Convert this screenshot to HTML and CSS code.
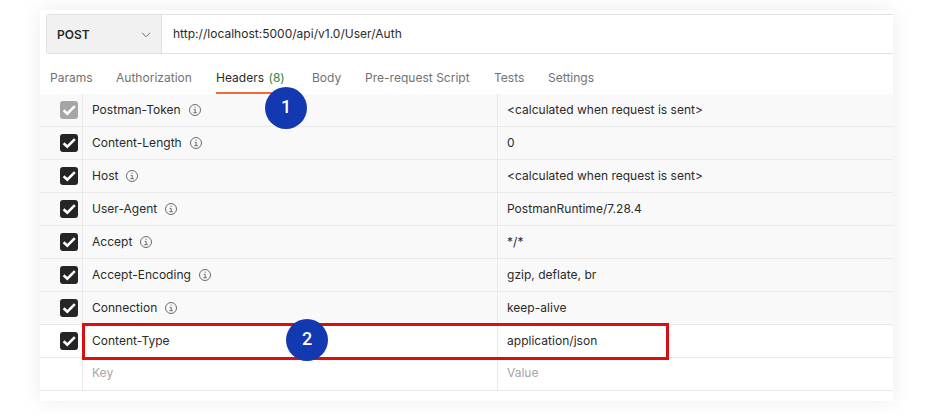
FILE: index.html
```
<!DOCTYPE html>
<html lang="en">
<head>
<meta charset="utf-8">
<title>Request headers</title>
<link rel="stylesheet" href="styles.css">
</head>
<body>
<svg class="defs" width="0" height="0">
  <symbol id="check" viewBox="0 0 17 17"><path d="M3.4 8.7 6.9 12 14 4.9" fill="none" stroke="#fff" stroke-width="2.4"/></symbol>
  <symbol id="info" viewBox="0 0 12 12"><circle cx="6" cy="6" r="5.5" fill="none" stroke="#6b6b6b"/><path d="M4.6 5.4H6.2V8.6M4.3 8.7H7.9M5.5 3.2H6.7" fill="none" stroke="#6b6b6b"/></symbol>
</svg>
<main class="card">
  <div class="request">
    <div class="method"><span>POST</span><svg width="10" height="6" viewBox="0 0 10 6"><path d="M1 .8 5 4.8 9 .8" fill="none" stroke="#6b6b6b"/></svg></div>
    <div class="url">http://localhost:5000/api/v1.0/User/Auth</div>
  </div>
  <nav class="tabs">
    <span class="tab params">Params</span>
    <span class="tab auth">Authorization</span>
    <span class="tab headers">Headers <b>(8)</b></span>
    <span class="tab body">Body</span>
    <span class="tab script">Pre-request Script</span>
    <span class="tab tests">Tests</span>
    <span class="tab">Settings</span>
  </nav>
  <div class="table">
    <div class="row auto"><div class="tick"><svg class="box off"><use href="#check"/></svg></div><div class="cell">Postman-Token<svg class="info"><use href="#info"/></svg></div><div class="cell">&lt;calculated when request is sent&gt;</div></div>
    <div class="row auto"><div class="tick"><svg class="box"><use href="#check"/></svg></div><div class="cell">Content-Length<svg class="info"><use href="#info"/></svg></div><div class="cell">0</div></div>
    <div class="row auto"><div class="tick"><svg class="box"><use href="#check"/></svg></div><div class="cell">Host<svg class="info"><use href="#info"/></svg></div><div class="cell">&lt;calculated when request is sent&gt;</div></div>
    <div class="row auto"><div class="tick"><svg class="box"><use href="#check"/></svg></div><div class="cell">User-Agent<svg class="info"><use href="#info"/></svg></div><div class="cell">PostmanRuntime/7.28.4</div></div>
    <div class="row auto"><div class="tick"><svg class="box"><use href="#check"/></svg></div><div class="cell">Accept<svg class="info"><use href="#info"/></svg></div><div class="cell">*/*</div></div>
    <div class="row auto"><div class="tick"><svg class="box"><use href="#check"/></svg></div><div class="cell">Accept-Encoding<svg class="info"><use href="#info"/></svg></div><div class="cell">gzip, deflate, br</div></div>
    <div class="row auto"><div class="tick"><svg class="box"><use href="#check"/></svg></div><div class="cell">Connection<svg class="info"><use href="#info"/></svg></div><div class="cell">keep-alive</div></div>
    <div class="row"><div class="tick"><svg class="box"><use href="#check"/></svg></div><div class="cell">Content-Type</div><div class="cell">application/json</div></div>
    <div class="row empty"><div class="tick"></div><div class="cell">Key</div><div class="cell">Value</div></div>
  </div>
  <div class="highlight"></div>
  <div class="badge one">1</div>
  <div class="badge two">2</div>
</main>
</body>
</html>
```
FILE: styles.css
```
* { box-sizing: border-box; }
body {
  margin: 0;
  padding: 10px 38px 14px 40px;
  height: 415px;
  overflow: hidden;
  background: #fff;
  color: #2a2a2a;
  font: 12px/16px Inter, "Liberation Sans", sans-serif;
  letter-spacing: 0.02px;
}
svg { display: block; flex: none; }
.defs { position: absolute; }
.card {
  position: relative;
  height: 391px;
  padding-top: 4px;
  background: #fff;
  box-shadow: 0 0 20px rgba(0, 0, 0, 0.08);
}
.request {
  display: flex;
  height: 40px;
  margin-left: 6px;
  border: 1px solid #e1e1e1;
  border-right: 0;
  border-radius: 3px 0 0 3px;
}
.method {
  display: flex;
  align-items: center;
  justify-content: space-between;
  width: 115px;
  padding: 2px 10px 0 10px;
  background: #f1f1f1;
  border-right: 1px solid #e1e1e1;
  font-weight: 600;
}
.url { padding: 11px 0 0 11px; }
.tabs {
  display: flex;
  height: 40px;
  padding: 16px 0 0 10px;
  color: #727272;
}
.tab { white-space: nowrap; }
.params { width: 66px; }
.auth { width: 100px; }
.headers {
  width: 72px;
  margin-right: 24px;
  border-bottom: 2px solid #f26b3a;
  color: #2a2a2a;
}
.headers b { margin-left: 1px; color: #1f8a3f; font-weight: 400; }
.body { width: 53px; }
.script { width: 129px; }
.tests { width: 54px; }
.row {
  display: grid;
  grid-template-columns: 42px 415px 1fr;
  height: 33px;
  border-bottom: 1px solid #e9e9e9;
}
.auto { background: #f9f9f9; }
.tick { padding: 7px 0 0 20px; }
.box {
  width: 18px;
  height: 18px;
  border-radius: 3px;
  background: #252525;
}
.off { background: #a6a6a6; }
.cell {
  display: flex;
  align-items: center;
  gap: 8px;
  padding-left: 9px;
  border-left: 1px solid #e9e9e9;
}
.info { width: 12px; height: 12px; }
.empty { color: #a6a6a6; }
.empty .cell { padding-bottom: 2px; }
.highlight {
  position: absolute;
  left: 42px;
  top: 313px;
  width: 587px;
  height: 37px;
  border: 3px solid #dc0d10;
}
.badge {
  position: absolute;
  width: 42px;
  height: 42px;
  border-radius: 50%;
  background: #1238b2;
  color: #fff;
  font: 500 18px/40px Roboto, sans-serif;
  letter-spacing: 0;
  text-align: center;
}
.one { left: 225px; top: 77px; }
.two { left: 246px; top: 309px; }
```
